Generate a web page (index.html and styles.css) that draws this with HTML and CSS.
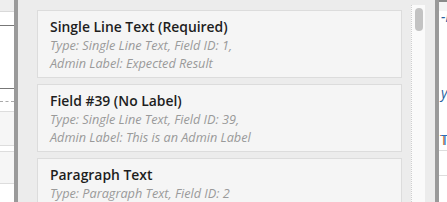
FILE: index.html
```html
<!DOCTYPE html>
<html lang="en">
<head>
    <meta charset="UTF-8">
    <title>Field Picker</title>
    <link rel="stylesheet" href="styles.css">
</head>
<body>
    <div class="page">
        <div class="behind behind-left">
            <div class="bl-top"></div>
            <div class="bl-row bl-head"></div>
            <div class="bl-row bl-body"></div>
            <div class="bl-row bl-dash"></div>
            <div class="bl-row bl-soft"></div>
            <div class="bl-row bl-item"></div>
            <div class="bl-row bl-item2"></div>
            <div class="bl-row bl-item3"></div>
        </div>
        <div class="edge"></div>

        <div class="modal">
            <ul class="field-list">
                <li class="field-card">
                    <div class="field-title">Single Line Text (Required)</div>
                    <div class="field-meta">Type: Single Line Text, Field ID: 1,<br>Admin Label: Expected Result</div>
                </li>
                <li class="field-card">
                    <div class="field-title">Field #39 (No Label)</div>
                    <div class="field-meta">Type: Single Line Text, Field ID: 39,<br>Admin Label: This is an Admin Label</div>
                </li>
                <li class="field-card">
                    <div class="field-title">Paragraph Text</div>
                    <div class="field-meta">Type: Paragraph Text, Field ID: 2</div>
                </li>
            </ul>
            <div class="scroll-track">
                <div class="scroll-thumb"></div>
            </div>
        </div>

        <div class="edge"></div>
        <div class="behind behind-right">
            <div class="br-top"></div>
            <div class="br-text br-i">-i</div>
            <div class="br-text br-y">y</div>
            <div class="br-text br-t">T</div>
            <div class="br-line"></div>
            <div class="br-line br-line2"></div>
        </div>
    </div>
</body>
</html>
```

FILE: styles.css
```css
html, body {
    margin: 0;
    padding: 0;
    height: 100%;
    overflow: hidden;
}
body {
    font-family: "Open Sans", Arial, sans-serif;
    background-color: #ececec;
}
.page {
    display: flex;
    height: 202px;
}

/* page behind the modal */
.behind {
    background-color: #fff;
    overflow: hidden;
}
.behind-left {
    width: 14px;
    display: flex;
    flex-direction: column;
}
.bl-top {
    height: 11px;
    background-color: #eeeeee;
    border-bottom: 1px solid #d9d9d9;
}
.bl-head {
    height: 13px;
    border-bottom: 1px solid #777;
}
.bl-body {
    height: 62px;
    border-bottom: 1px solid #777;
}
.bl-dash {
    height: 12px;
    border-bottom: 1px dashed #aaa;
}
.bl-soft {
    height: 9px;
    border-bottom: 1px solid #ddd;
}
.bl-item {
    height: 33px;
    background-color: #f6f6f6;
    border-bottom: 1px solid #ddd;
}
.bl-item2 {
    height: 5px;
    border-bottom: 1px solid #ddd;
}
.bl-item3 {
    height: 31px;
    background-color: #f6f6f6;
    border-bottom: 1px solid #ddd;
}
.edge {
    width: 4px;
    background-color: #9a9a9a;
}
.behind-right {
    flex: 1;
    font-style: italic;
    font-size: 14px;
    color: #2a5f9e;
    white-space: nowrap;
}
.br-top {
    height: 11px;
    background-color: #f4f4f4;
    border-top: 2px solid #8a8a8a;
    box-sizing: border-box;
}
.br-text {
    padding-left: 2px;
    line-height: 16px;
}
.br-i {
    margin-top: -2px;
}
.br-y {
    margin-top: 60px;
}
.br-t {
    margin-top: 31px;
    font-style: normal;
    color: #2a6fb8;
    text-shadow: -1px 0 0 #c87a2a;
}
.br-line {
    border-top: 1px solid #ddd;
    margin-top: 2px;
}
.br-line2 {
    margin-top: 24px;
}

/* modal */
.modal {
    width: 417px;
    display: flex;
    background-color: #ececec;
}
.field-list {
    list-style: none;
    margin: 0;
    padding: 10px 0 0 19px;
    width: 365px;
}
.field-card {
    box-sizing: border-box;
    height: 68px;
    margin-bottom: 6px;
    padding: 6px 12px 5px 12px;
    background-color: #f5f5f5;
    border: 1px solid #dcdcdc;
}
.field-title {
    font-size: 13.9px;
    font-weight: 600;
    line-height: 19px;
    color: #1e1e1e;
}
.field-meta {
    font-size: 12.7px;
    font-style: italic;
    line-height: 18px;
    color: #9a9a9a;
}
.scroll-track {
    box-sizing: border-box;
    width: 14px;
    margin: 5px 0 0 9px;
    padding: 3px 2px 0 3px;
    background-color: #fafafa;
    border-left: 1px dotted #cfcfcf;
}
.scroll-thumb {
    width: 8px;
    height: 23px;
    border-radius: 4px;
    background-color: #c3c3c3;
}
```
